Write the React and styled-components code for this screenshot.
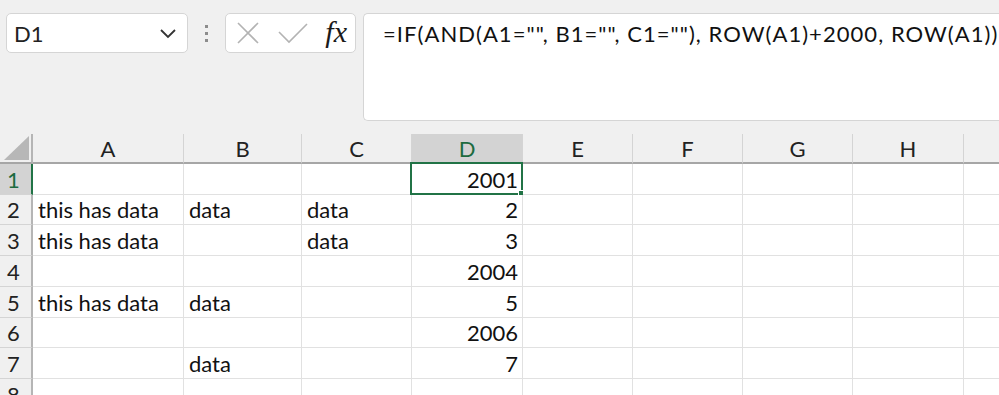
import React from "react";
import styled, { createGlobalStyle } from "styled-components";

const GlobalStyle = createGlobalStyle`
  html, body { margin: 0; padding: 0; background: #f0f0f0; overflow: hidden; }
  body { font-family: Lato, "Noto Sans", sans-serif; }
`;

const Page = styled.div`
  width: 999px;
  height: 395px;
  overflow: hidden;
  background: #f0f0f0;
  display: flex;
  flex-direction: column;
`;

const FormulaArea = styled.div`
  display: flex;
  align-items: flex-start;
  padding: 13px 0 0 6px;
  height: 121px;
  box-sizing: border-box;
  flex-shrink: 0;
`;

const Box = styled.div`
  background: #fff;
  border: 1px solid #d5d5d5;
  border-radius: 5px;
  box-sizing: border-box;
  height: 40px;
  display: flex;
  align-items: center;
  flex-shrink: 0;
`;

const NameBox = styled(Box)`
  width: 182px;
  padding: 0 10px 0 7px;
  justify-content: space-between;
  font-size: 22px;
  color: #222;
`;

const Dots = styled.div`
  width: 37px;
  height: 40px;
  display: flex;
  flex-direction: column;
  align-items: center;
  justify-content: center;
  gap: 4px;
  flex-shrink: 0;
  span {
    width: 3px;
    height: 3px;
    background: #8c8c8c;
  }
`;

const FxBox = styled(Box)`
  width: 131px;
  padding: 0 8px 0 10px;
  justify-content: space-between;
`;

const Fx = styled.span`
  font-family: "Liberation Serif", "DejaVu Serif", serif;
  font-style: italic;
  font-size: 30px;
  line-height: 1;
  color: #1a1a1a;
  margin-top: -2px;
`;

const FormulaBox = styled(Box)`
  margin-left: 7px;
  width: 700px;
  height: 108px;
  align-items: flex-start;
  padding: 6px 0 0 19px;
  font-size: 22px;
  letter-spacing: 1.05px;
  color: #111;
  white-space: nowrap;
  overflow: hidden;
  border-right: none;
  border-top-right-radius: 0;
  border-bottom-right-radius: 0;
`;

const Grid = styled.div`
  margin-top: 13px;
  display: flex;
  flex-direction: column;
`;

const Row = styled.div`
  display: flex;
  height: ${(p) => p.$h}px;
  flex-shrink: 0;
`;

const HeadCell = styled.div`
  width: ${(p) => p.$w}px;
  flex-shrink: 0;
  box-sizing: border-box;
  background: ${(p) => (p.$sel ? "#d3d3d3" : "#f0f0f0")};
  color: ${(p) => (p.$sel ? "#1d6b3f" : "#222")};
  border-right: 1px solid #d4d4d4;
  border-bottom: 2px solid #a6a6a6;
  display: flex;
  align-items: center;
  justify-content: center;
  font-size: 22px;
`;

const Corner = styled.div`
  width: 33px;
  flex-shrink: 0;
  box-sizing: border-box;
  background: #f0f0f0;
  border-right: 2px solid #b5b5b5;
  border-bottom: 2px solid #a6a6a6;
  display: flex;
  align-items: flex-end;
  justify-content: flex-end;
  padding: 0 2px 2px 0;
`;

const RowHead = styled.div`
  width: 33px;
  flex-shrink: 0;
  box-sizing: border-box;
  background: ${(p) => (p.$sel ? "#d3d3d3" : "#f0f0f0")};
  color: ${(p) => (p.$sel ? "#1d6b3f" : "#222")};
  border-right: 2px solid ${(p) => (p.$sel ? "#217346" : "#b5b5b5")};
  border-bottom: 1px solid #d4d4d4;
  display: flex;
  align-items: center;
  padding-left: 7px;
  font-size: 22px;
`;

const Cell = styled.div`
  position: relative;
  width: ${(p) => p.$w}px;
  flex-shrink: 0;
  box-sizing: border-box;
  background: #fff;
  border-right: 1px solid #e1e1e1;
  border-bottom: 1px solid #e1e1e1;
  display: flex;
  align-items: center;
  justify-content: ${(p) => (p.$num ? "flex-end" : "flex-start")};
  padding: ${(p) => (p.$num ? "0 4px 0 0" : "0 0 0 5px")};
  font-size: 22px;
  color: #111;
  white-space: nowrap;
`;

const Selection = styled.div`
  position: absolute;
  left: -2px;
  top: -2px;
  right: -1px;
  bottom: -1px;
  border: 2px solid #217346;
  pointer-events: none;
`;

const Handle = styled.div`
  position: absolute;
  right: -5px;
  bottom: -5px;
  width: 6px;
  height: 6px;
  background: #217346;
  border: 1px solid #fff;
`;

const cols = [
  { k: "A", w: 151 },
  { k: "B", w: 118 },
  { k: "C", w: 110 },
  { k: "D", w: 111 },
  { k: "E", w: 110 },
  { k: "F", w: 110 },
  { k: "G", w: 110 },
  { k: "H", w: 111 },
  { k: "I", w: 40, blank: true },
];

const data = [
  ["", "", "", "2001"],
  ["this has data", "data", "data", "2"],
  ["this has data", "", "data", "3"],
  ["", "", "", "2004"],
  ["this has data", "data", "", "5"],
  ["", "", "", "2006"],
  ["", "data", "", "7"],
  ["", "", "", ""],
];

const heights = [31, 30, 31, 31, 31, 30, 31, 31];

const Chevron = () => (
  <svg width="18" height="12" viewBox="0 0 18 12">
    <path d="M2 3 L9 10 L16 3" fill="none" stroke="#333" strokeWidth="1.8" />
  </svg>
);

const XIcon = () => (
  <svg width="24" height="24" viewBox="0 0 24 24">
    <path d="M2 2 L22 22 M22 2 L2 22" stroke="#b3b3b3" strokeWidth="1.6" fill="none" />
  </svg>
);

const Check = () => (
  <svg width="30" height="22" viewBox="0 0 30 22">
    <path d="M1 10 L11 20 L29 2" stroke="#b3b3b3" strokeWidth="1.6" fill="none" />
  </svg>
);

const CornerTri = () => (
  <svg width="25" height="24" viewBox="0 0 25 24">
    <path d="M25 0 L25 24 L0 24 Z" fill="#b7b7b7" />
  </svg>
);

export default function App() {
  return (
    <Page>
      <GlobalStyle />
      <FormulaArea>
        <NameBox>
          <span>D1</span>
          <Chevron />
        </NameBox>
        <Dots>
          <span />
          <span />
          <span />
        </Dots>
        <FxBox>
          <XIcon />
          <Check />
          <Fx>fx</Fx>
        </FxBox>
        <FormulaBox>=IF(AND(A1="", B1="", C1=""), ROW(A1)+2000, ROW(A1))</FormulaBox>
      </FormulaArea>
      <Grid>
        <Row $h={30}>
          <Corner>
            <CornerTri />
          </Corner>
          {cols.map((c) => (
            <HeadCell key={c.k} $w={c.w} $sel={c.k === "D"}>
              {c.blank ? "" : c.k}
            </HeadCell>
          ))}
        </Row>
        {data.map((r, i) => (
          <Row key={i} $h={heights[i]}>
            <RowHead $sel={i === 0}>{i + 1}</RowHead>
            {cols.map((c, j) => (
              <Cell key={c.k} $w={c.w} $num={j === 3}>
                {r[j] || ""}
                {i === 0 && j === 3 && (
                  <Selection>
                    <Handle />
                  </Selection>
                )}
              </Cell>
            ))}
          </Row>
        ))}
      </Grid>
    </Page>
  );
}
